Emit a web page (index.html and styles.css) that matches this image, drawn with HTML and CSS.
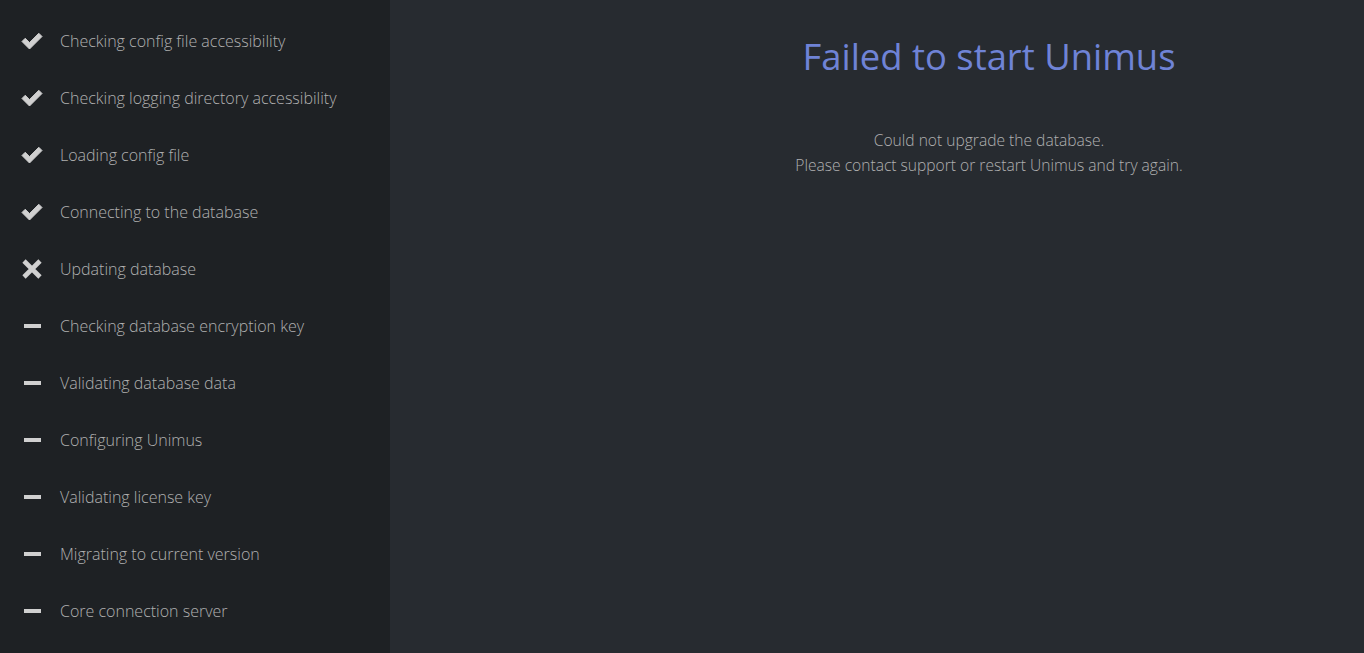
FILE: index.html
```html
<!doctype html>
<html lang="en">
  <head>
    <meta charset="UTF-8" />
    <title>Unimus - Startup</title>
    <link rel="stylesheet" href="styles.css">
  </head>
  <body>
    <div class="layout">
      <ul class="steps">
        <li class="step">
          <svg class="step-icon" viewBox="0 0 24 24"><path d="M2 12.5l3.2-3.2 4.3 4.3L18.8 4.3 22 7.5 9.5 20z" /></svg>
          <span>Checking config file accessibility</span>
        </li>
        <li class="step">
          <svg class="step-icon" viewBox="0 0 24 24"><path d="M2 12.5l3.2-3.2 4.3 4.3L18.8 4.3 22 7.5 9.5 20z" /></svg>
          <span>Checking logging directory accessibility</span>
        </li>
        <li class="step">
          <svg class="step-icon" viewBox="0 0 24 24"><path d="M2 12.5l3.2-3.2 4.3 4.3L18.8 4.3 22 7.5 9.5 20z" /></svg>
          <span>Loading config file</span>
        </li>
        <li class="step">
          <svg class="step-icon" viewBox="0 0 24 24"><path d="M2 12.5l3.2-3.2 4.3 4.3L18.8 4.3 22 7.5 9.5 20z" /></svg>
          <span>Connecting to the database</span>
        </li>
        <li class="step">
          <svg class="step-icon" viewBox="0 0 24 24"><path d="M4 4L20 20M20 4L4 20" stroke-width="4.6" /></svg>
          <span>Updating database</span>
        </li>
        <li class="step">
          <span class="step-dash"></span>
          <span>Checking database encryption key</span>
        </li>
        <li class="step">
          <span class="step-dash"></span>
          <span>Validating database data</span>
        </li>
        <li class="step">
          <span class="step-dash"></span>
          <span>Configuring Unimus</span>
        </li>
        <li class="step">
          <span class="step-dash"></span>
          <span>Validating license key</span>
        </li>
        <li class="step">
          <span class="step-dash"></span>
          <span>Migrating to current version</span>
        </li>
        <li class="step">
          <span class="step-dash"></span>
          <span>Core connection server</span>
        </li>
      </ul>

      <main class="status">
        <h1>Failed to start Unimus</h1>
        <p>Could not upgrade the database.<br />Please contact support or restart Unimus and try again.</p>
      </main>
    </div>
  </body>
</html>
```

FILE: styles.css
```css
:root {
  --sidebar-bg: #1e2124;
  --main-bg: #272b30;
  --text-color: #b0b0b0;
  --icon-color: #d0d0d0;
  --title-color: #6f83d6;
}

* {
  box-sizing: border-box;
  margin: 0;
  padding: 0;
}

html,
body {
  height: 100%;
}

body {
  font-family: "Open Sans", "Liberation Sans", sans-serif;
  font-weight: 300;
  background-color: var(--main-bg);
  color: var(--text-color);
  overflow: hidden;
}

.layout {
  display: flex;
  height: 100%;
}

.steps {
  list-style: none;
  width: 390px;
  flex-shrink: 0;
  background-color: var(--sidebar-bg);
  padding-top: 12px;
}

.step {
  display: flex;
  align-items: center;
  height: 57px;
  padding-left: 20px;
  font-size: 16px;
}

.step-icon {
  width: 24px;
  height: 24px;
  margin-right: 16px;
  fill: var(--icon-color);
  stroke: var(--icon-color);
}

.step-dash {
  display: block;
  width: 17px;
  height: 4px;
  margin: 0 19px 0 4px;
  background-color: var(--icon-color);
}

.status {
  flex-grow: 1;
  text-align: center;
  padding-left: 224px;
  padding-top: 32px;
}

.status h1 {
  font-weight: 400;
  font-size: 36.4px;
  color: var(--title-color);
  line-height: 48px;
  margin-bottom: 48px;
}

.status p {
  font-size: 15.6px;
  line-height: 25px;
}
```
